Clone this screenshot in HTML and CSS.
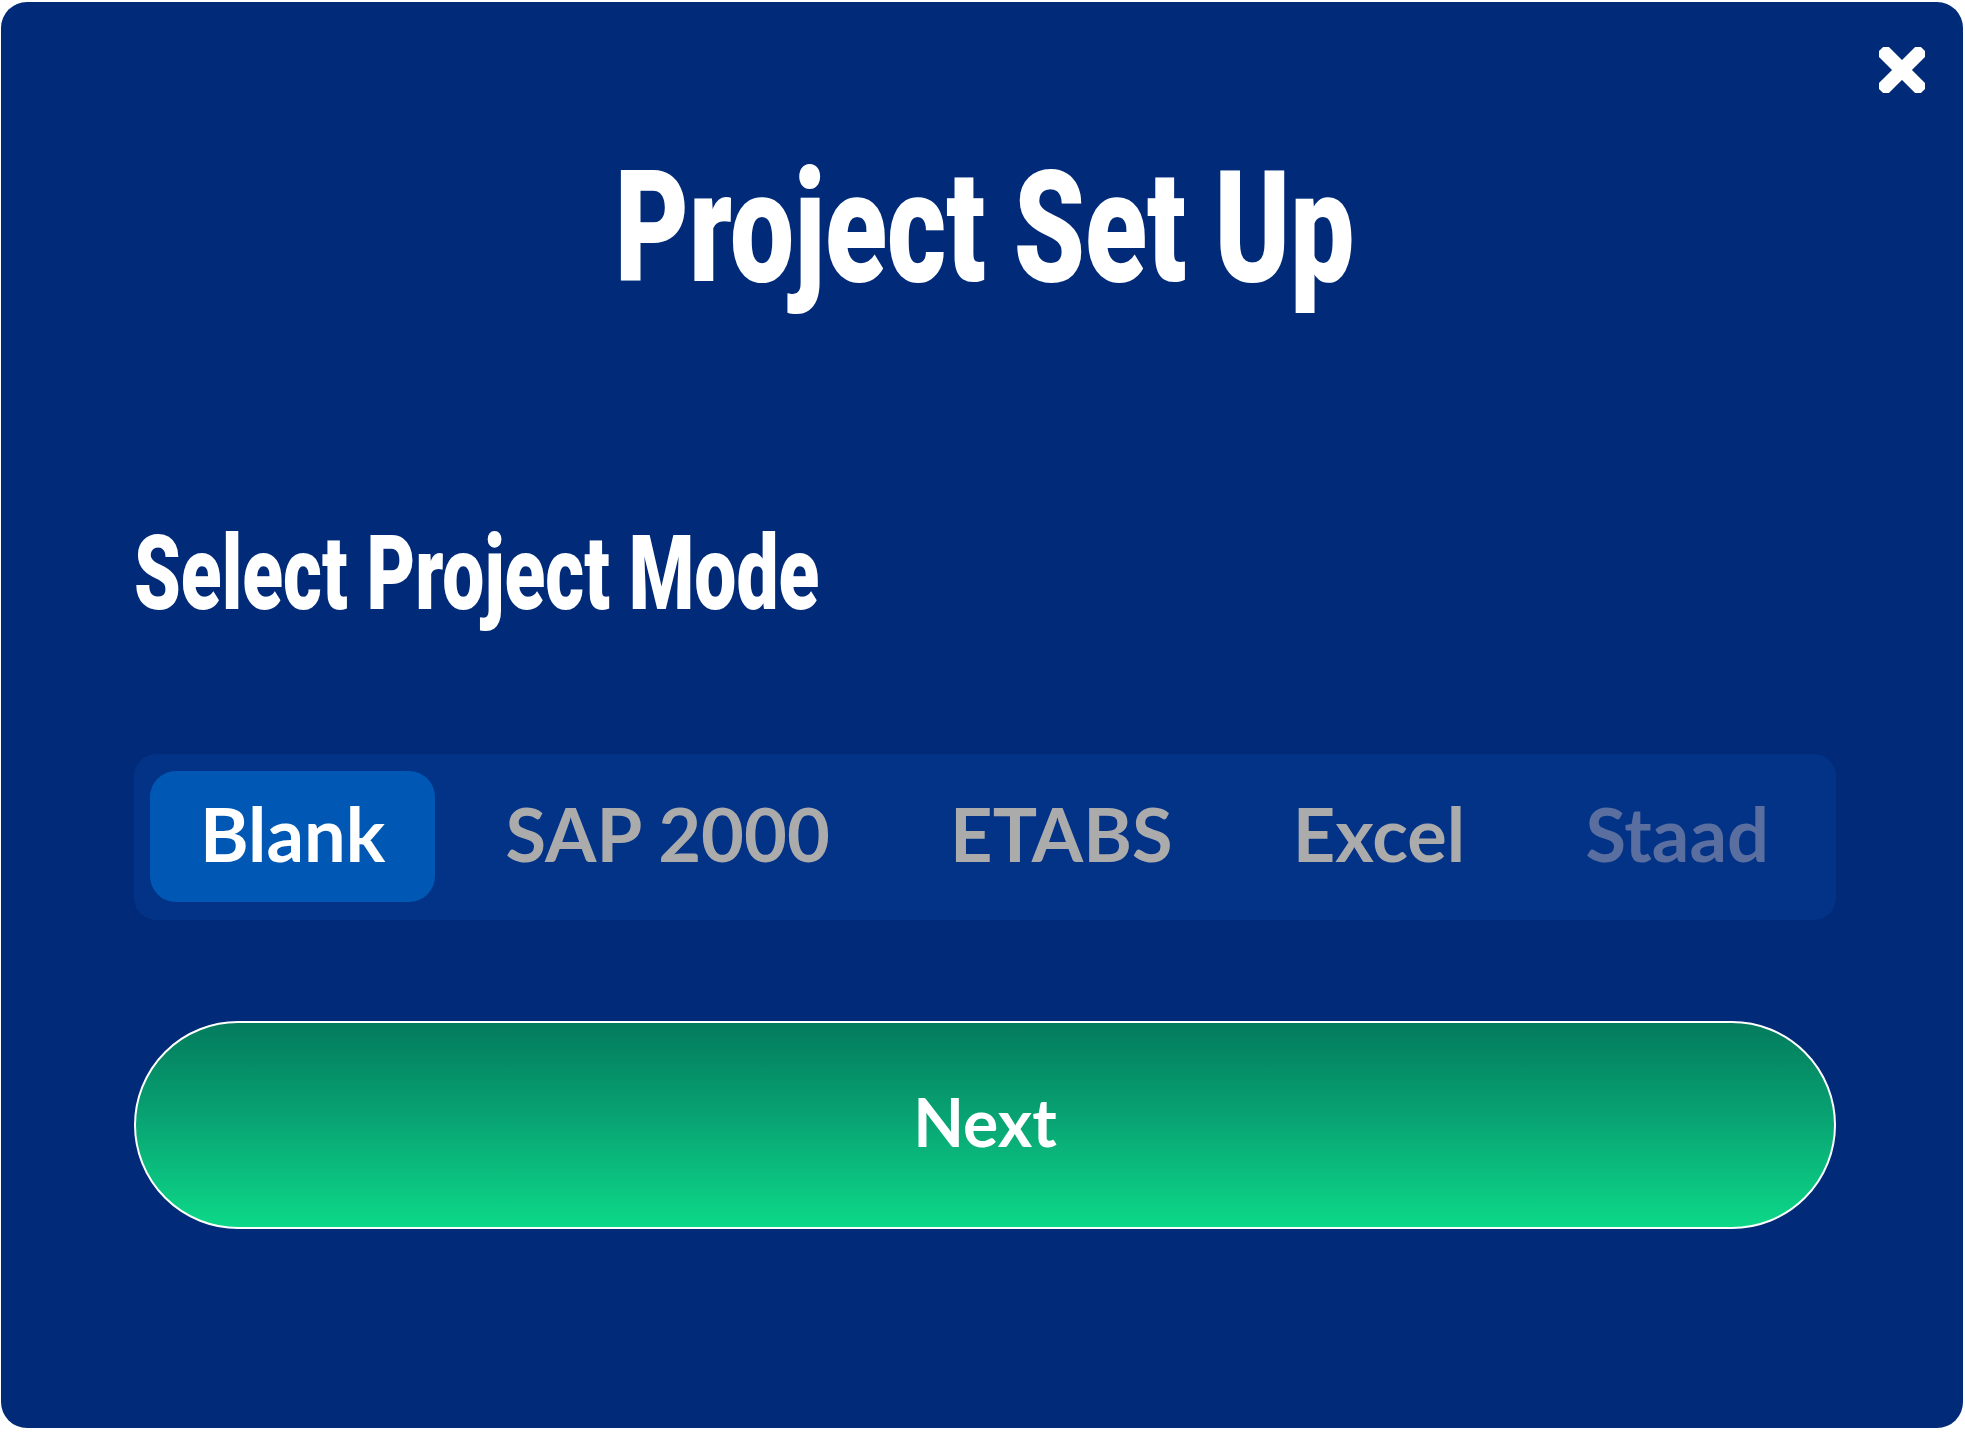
FILE: index.html
```html
<!DOCTYPE html>
<html lang="en">
<head>
<meta charset="utf-8">
<title>Project Set Up</title>
<link rel="stylesheet" href="styles.css">
</head>
<body>
<div class="modal">
  <button class="close" aria-label="Close">
    <svg width="46" height="46" viewBox="0 0 46 46">
      <path d="M7 7 L39 39 M39 7 L7 39" stroke="#ffffff" stroke-width="14" stroke-linecap="square" stroke-linejoin="round" fill="none"/>
    </svg>
  </button>
  <h1 class="title"><span class="condensed">Project Set Up</span></h1>
  <h2 class="subtitle"><span class="condensed left">Select Project Mode</span></h2>
  <div class="segments">
    <div class="seg active">Blank</div>
    <div class="seg">SAP 2000</div>
    <div class="seg">ETABS</div>
    <div class="seg">Excel</div>
    <div class="seg disabled">Staad</div>
  </div>
  <button class="next">Next</button>
</div>
</body>
</html>
```
FILE: styles.css
```css
html, body {
  margin: 0;
  padding: 0;
  background: #ffffff;
}
body {
  width: 1965px;
  height: 1432px;
  overflow: hidden;
}
.modal {
  position: relative;
  box-sizing: border-box;
  margin: 2px 0 0 1px;
  width: 1962px;
  height: 1426px;
  border-radius: 26px;
  background: #012a78;
  padding: 148px 127px 0 133px;
  display: flex;
  flex-direction: column;
}
.close {
  position: absolute;
  top: 45px;
  right: 38px;
  width: 46px;
  height: 46px;
  padding: 0;
  border: 0;
  background: transparent;
  display: block;
}
.close svg { display: block; }
.title {
  margin: 0;
  font-family: Roboto, "Liberation Sans", sans-serif;
  font-weight: 900;
  font-size: 156px;
  line-height: 156px;
  color: #ffffff;
  text-align: center;
  white-space: nowrap;
}
.condensed {
  display: inline-block;
  transform: scaleX(0.73);
  transform-origin: center;
}
.condensed.left {
  transform: scaleX(0.72);
  transform-origin: left center;
}
.subtitle {
  margin: 216px 0 0 0;
  font-family: Roboto, "Liberation Sans", sans-serif;
  font-weight: 900;
  font-size: 104px;
  line-height: 104px;
  color: #ffffff;
  white-space: nowrap;
}
.segments {
  margin-top: 128px;
  height: 166px;
  box-sizing: border-box;
  padding: 17px 17px 18px 16px;
  background: #023387;
  border-radius: 22px;
  display: flex;
  justify-content: space-between;
  align-items: stretch;
}
.seg {
  display: flex;
  align-items: center;
  padding: 0 50px 6px 50px;
  border-radius: 26px;
  font-family: Lato, "Liberation Sans", sans-serif;
  font-weight: 700;
  font-size: 74px;
  line-height: 1;
  color: #ababab;
  white-space: nowrap;
}
.seg.active {
  background: #0058b4;
  color: #ffffff;
}
.seg.disabled {
  color: #5a6f9f;
}
.next {
  margin-top: 101px;
  height: 208px;
  width: 100%;
  box-sizing: border-box;
  border: 2px solid #ffffff;
  border-radius: 104px;
  background: linear-gradient(to bottom, #037b5d 0%, #08a272 45%, #0dd888 100%);
  color: #ffffff;
  font-family: Lato, "Liberation Sans", sans-serif;
  font-weight: 700;
  font-size: 66px;
  line-height: 1;
  padding: 0 0 6px 0;
}
```
